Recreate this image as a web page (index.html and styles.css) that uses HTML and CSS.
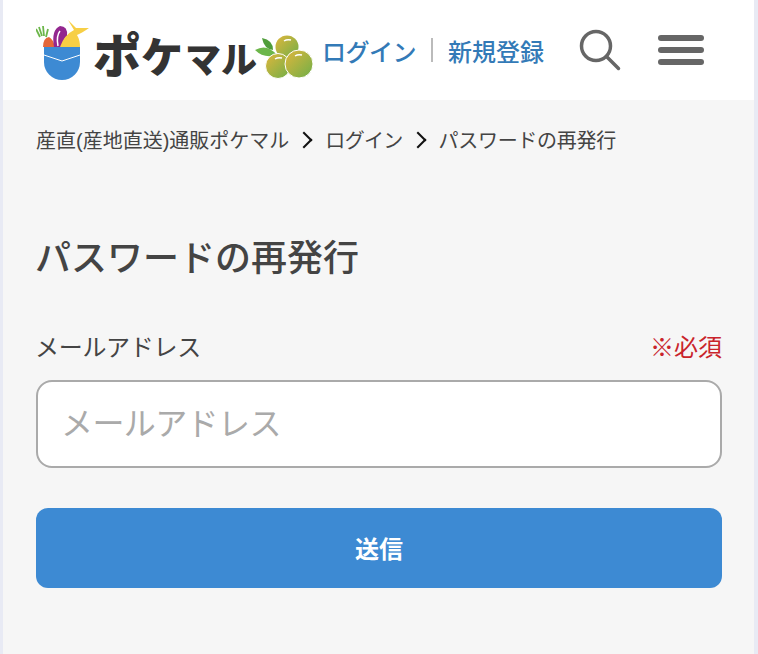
FILE: index.html
```html
<!DOCTYPE html>
<html lang="ja">
<head>
    <meta charset="UTF-8">
    <meta name="viewport" content="width=device-width, initial-scale=1.0">
    <title>パスワードの再発行</title>
    <link rel="stylesheet" href="styles.css">
</head>
<body>
    <div class="page">
        <!-- Header -->
        <header class="header">
            <a href="#" class="logo">
                <svg class="logo-pocket" width="54" height="60" viewBox="0 0 54 60">
                    <path d="M4 17 L0 9 M6 16 L3 7 M8 16 L7 6 M10 17 L12 9" stroke="#6cb64a" stroke-width="1.800" fill="none"/>
                    <path d="M7 27 Q7 18 13 17 Q17 19 19 27 Z" fill="#e4673a"/>
                    <path d="M18 27 Q15 10 24 6 Q32 6 31 16 Q27 19 26 27 Z" fill="#93278f"/>
                    <path d="M22 26 Q20 16 24 11" stroke="#fff" stroke-width="1.500" fill="none"/>
                    <path d="M24 27 Q28 15 38 10 L32 0 L40 8 L53 8 Q46 13 41 15 Q44 20 44 27 Z" fill="#f7cf45"/>
                    <path d="M8 27 H44 V42 A18 18 0 0 1 8 42 Z" fill="#3d8ad3"/>
                    <path d="M8 35 L26 41 L44 35" stroke="#fff" stroke-width="1" fill="none"/>
                </svg>
                <span class="logo-text"><span class="logo-po">ポ</span><span class="logo-ke">ケ</span>マル</span>
                <svg class="logo-fruit" width="58" height="44" viewBox="0 0 58 44">
                    <defs>
                        <linearGradient id="fruit" x1="0" y1="0" x2="1" y2="1">
                            <stop offset="0" stop-color="#e0b63c"/>
                            <stop offset="1" stop-color="#6faf48"/>
                        </linearGradient>
                    </defs>
                    <path d="M0 15 Q12 8 22 20 Q9 24 0 15 Z" fill="#6cb64a"/>
                    <path d="M7 3 Q18 5 18 15 Q9 14 7 3 Z" fill="#4f9d3a"/>
                    <circle cx="32" cy="12" r="11.500" fill="url(#fruit)"/>
                    <circle cx="23" cy="31" r="12.500" fill="url(#fruit)" stroke="#fff" stroke-width="1"/>
                    <circle cx="44" cy="29" r="14" fill="url(#fruit)" stroke="#fff" stroke-width="1"/>
                    <path d="M29 6 Q32 4 36 5 M20 24 Q23 22 27 23 M40 21 Q43 19 47 20" stroke="#fff" stroke-width="1.500" fill="none"/>
                </svg>
            </a>
            <nav class="header-links">
                <a href="#" class="login-link">ログイン</a>
                <span class="divider"></span>
                <a href="#">新規登録</a>
            </nav>
            <svg class="icon-search" width="42" height="42" viewBox="0 0 42 42">
                <circle cx="17" cy="17" r="14.500" fill="none" stroke="#666" stroke-width="3.500"/>
                <path d="M27.500 27.500 L39.500 39.500" stroke="#666" stroke-width="3.500" stroke-linecap="round"/>
            </svg>
            <div class="icon-menu">
                <span></span>
                <span></span>
                <span></span>
            </div>
        </header>

        <!-- Breadcrumb -->
        <ol class="breadcrumb">
            <li>産直(産地直送)通販ポケマル</li>
            <li>ログイン</li>
            <li>パスワードの再発行</li>
        </ol>

        <!-- Reset form -->
        <main class="content">
            <h1>パスワードの再発行</h1>
            <div class="label-row">
                <label for="email">メールアドレス</label>
                <span class="required">※必須</span>
            </div>
            <input type="email" id="email" class="text-input" placeholder="メールアドレス">
            <button class="button">送信</button>
        </main>
    </div>
</body>
</html>
```

FILE: styles.css
```css
* {
    box-sizing: border-box;
}
html, body {
    height: 100%;
}
body {
    margin: 0;
    background-color: #e8eaf4;
    font-family: "Liberation Sans", "Noto Sans CJK JP", sans-serif;
    color: #444;
}
.page {
    margin: 0 4px 0 3px;
    height: 654px;
    overflow: hidden;
    background-color: #f6f6f6;
}
.header {
    display: flex;
    align-items: center;
    height: 100px;
    padding-left: 32px;
    background-color: #fff;
}
.logo {
    display: flex;
    align-items: center;
    flex: none;
    width: 287px;
    padding-left: 1px;
    color: #333;
    text-decoration: none;
}
.logo-pocket {
    flex: none;
}
.logo-text {
    flex: none;
    width: 162px;
    margin-left: 3px;
    margin-top: 18px;
    font-size: 36px;
    font-weight: 900;
    line-height: 48px;
    white-space: nowrap;
}
.logo-po {
    font-size: 48px;
}
.logo-ke {
    font-size: 42px;
    margin-right: 2px;
}
.logo-fruit {
    flex: none;
    margin-top: 14px;
}
.header-links {
    display: flex;
    align-items: center;
    flex: none;
    width: 257px;
    font-size: 24px;
    font-weight: 500;
}
.header-links a {
    color: #337ab7;
    text-decoration: none;
}
.login-link {
    letter-spacing: -0.5px;
}
.divider {
    width: 2px;
    height: 24px;
    margin: 0 15px 0 15px;
    background-color: #bbb;
}
.icon-search {
    flex: none;
    margin-right: 37px;
}
.icon-menu {
    display: flex;
    flex-direction: column;
    gap: 6px;
    width: 46px;
}
.icon-menu span {
    height: 6px;
    border-radius: 3px;
    background-color: #666;
}
.breadcrumb {
    display: flex;
    align-items: center;
    margin: 0;
    padding: 26px 33px 0;
    list-style: none;
    font-size: 20px;
    line-height: 30px;
}
.breadcrumb li + li::before {
    content: "";
    display: inline-block;
    width: 10px;
    height: 10px;
    margin: 0 15px 2px 9px;
    border-top: 2px solid #111;
    border-right: 2px solid #111;
    transform: rotate(45deg);
}
.breadcrumb li:nth-child(2) {
    letter-spacing: -0.7px;
}
.breadcrumb li:nth-child(3) {
    letter-spacing: -0.3px;
}
.content {
    padding: 0 32px 0 33px;
}
h1 {
    margin: 76px 0 0 -1px;
    font-size: 36px;
    font-weight: 500;
    line-height: 54px;
}
.label-row {
    display: flex;
    align-items: center;
    justify-content: space-between;
    margin-top: 44px;
    line-height: 36px;
    font-size: 24px;
}
.label-row label {
    margin-left: -1px;
    letter-spacing: -0.3px;
}
.required {
    color: #c9242b;
}
.text-input {
    display: block;
    width: 100%;
    height: 88px;
    margin-top: 14px;
    padding: 0 23px;
    border: 2px solid #aaa;
    border-radius: 16px;
    background-color: #fff;
    font-family: inherit;
    font-size: 32px;
    letter-spacing: -0.6px;
}
.text-input::placeholder {
    color: #aaa;
}
.button {
    display: block;
    width: 100%;
    height: 80px;
    margin-top: 40px;
    padding-bottom: 3px;
    border: none;
    border-radius: 12px;
    background-color: #3d8ad3;
    color: #fff;
    font-family: inherit;
    font-size: 24px;
    font-weight: 700;
}
```
